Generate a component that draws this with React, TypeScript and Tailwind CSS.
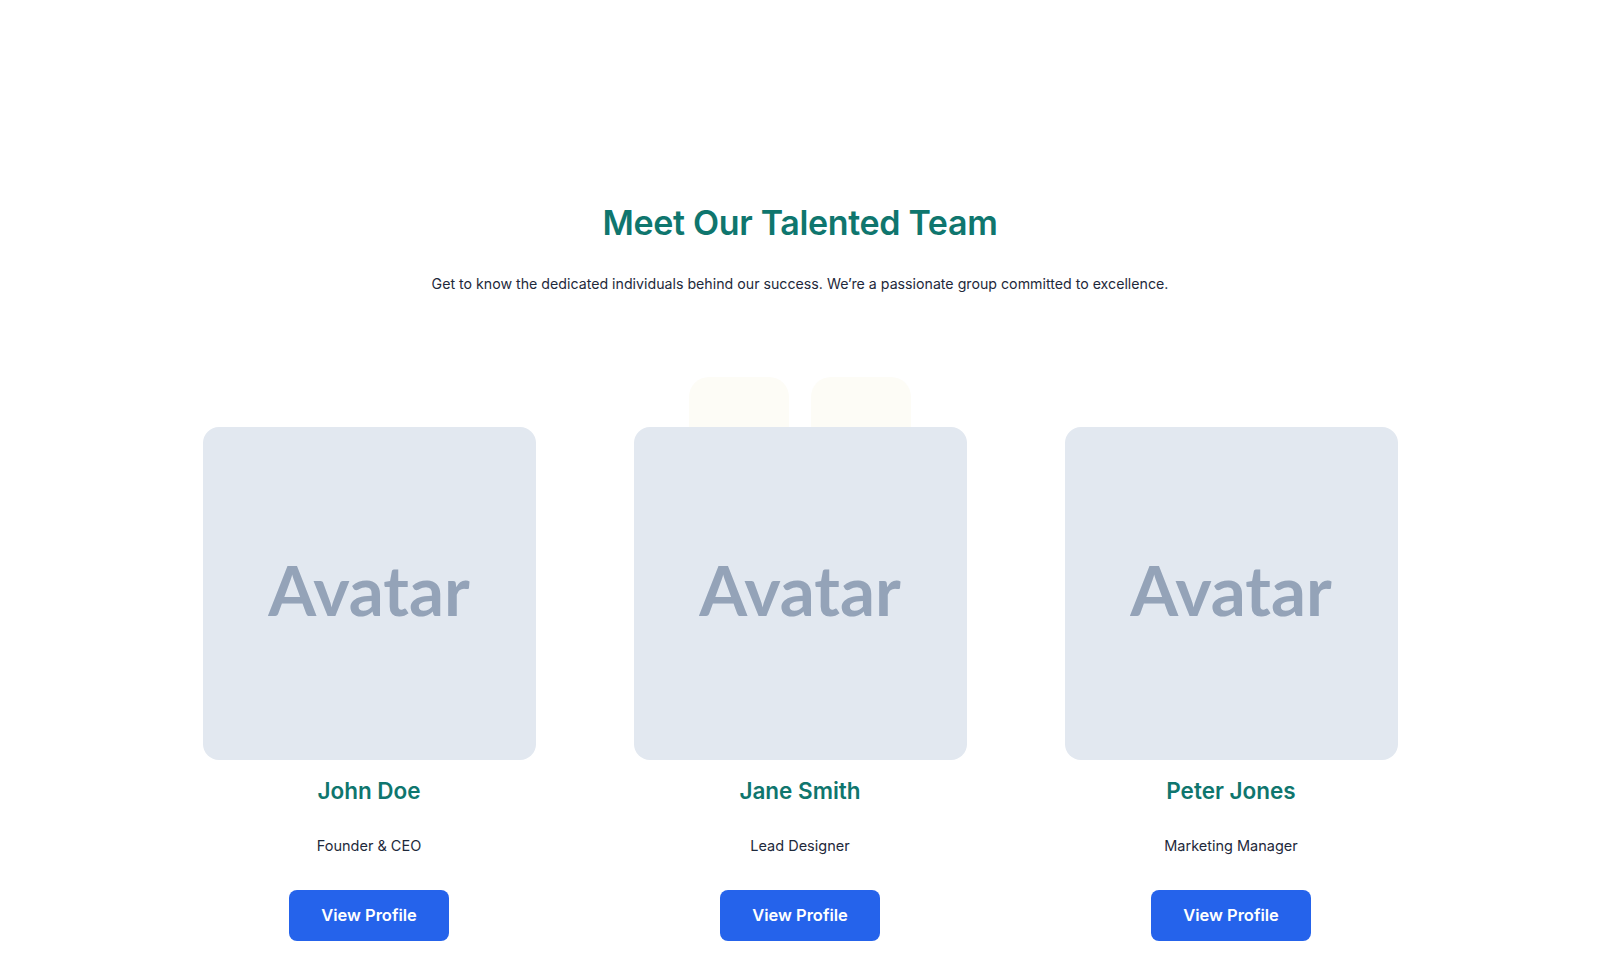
import React from "react";

type Member = { name: string; role: string };

const team: Member[] = [
  { name: "John Doe", role: "Founder & CEO" },
  { name: "Jane Smith", role: "Lead Designer" },
  { name: "Peter Jones", role: "Marketing Manager" },
];

const MemberCard = ({ name, role, decor }: Member & { decor?: boolean }) => {
  return (
    <div className="relative flex w-[333px] flex-col items-center">
      {/* faint tabs peeking out behind the middle card */}
      {decor && (
        <div className="absolute top-[-50px] left-1/2 flex -translate-x-1/2 gap-[22px]">
          <div className="h-[80px] w-[100px] rounded-[20px] bg-[#fdfcf6]" />
          <div className="h-[80px] w-[100px] rounded-[20px] bg-[#fdfcf6]" />
        </div>
      )}
      <div className="relative flex h-[333px] w-[333px] items-center justify-center rounded-2xl bg-[#e2e8f0] pb-[8px]">
        <span className="font-['Lato',sans-serif] text-[69px] font-bold text-[#94a3b8]">Avatar</span>
      </div>
      <h3 className="mt-[15px] text-[22.5px] leading-8 font-semibold text-[#0f766e]">{name}</h3>
      <p className="mt-[27px] text-[14.5px] leading-6 text-[#1e293b]">{role}</p>
      <button className="mt-[32px] h-[51px] w-[160px] rounded-lg bg-[#2563eb] text-[16.5px] font-semibold text-white">
        View Profile
      </button>
    </div>
  );
};

export default function App() {
  return (
    <div className="min-h-screen bg-white font-['Inter',sans-serif]">
      <section className="flex flex-col items-center pt-[203px] pb-[37px]">
        <h2 className="text-[34px] leading-10 font-semibold tracking-[-0.01em] text-[#0f766e]">
          Meet Our Talented Team
        </h2>
        <p className="mt-[29px] text-[14.2px] leading-6 text-[#1e293b]">
          Get to know the dedicated individuals behind our success. We’re a passionate group committed to excellence.
        </p>
        <div className="mt-[131px] flex gap-[98px]">
          {team.map((m, i) => (
            <MemberCard key={m.name} {...m} decor={i === 1} />
          ))}
        </div>
      </section>
    </div>
  );
}
